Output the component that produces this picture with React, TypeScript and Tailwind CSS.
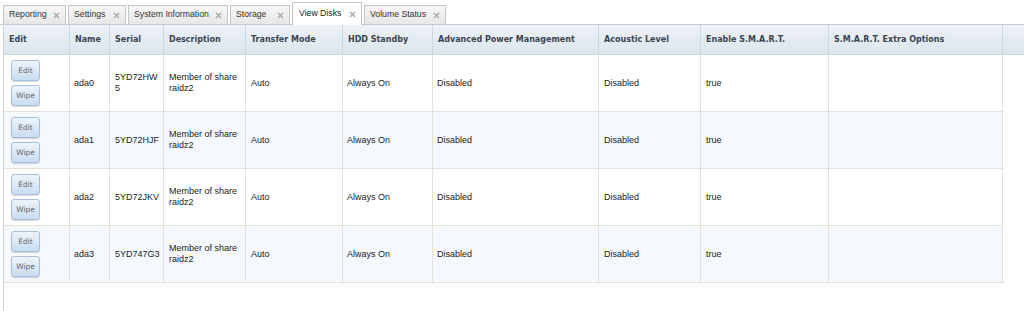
import React from "react";

const tabs = [
  { label: "Reporting", w: "w-[63px]" },
  { label: "Settings", w: "w-[58px]" },
  { label: "System Information", w: "w-[100px]" },
  { label: "Storage", w: "w-[60px]" },
  { label: "View Disks", w: "w-[70px]", active: true },
  { label: "Volume Status", w: "w-[82px]" },
];

const headers = [
  "Edit",
  "Name",
  "Serial",
  "Description",
  "Transfer Mode",
  "HDD Standby",
  "Advanced Power Management",
  "Acoustic Level",
  "Enable S.M.A.R.T.",
  "S.M.A.R.T. Extra Options",
];

const disks = [
  { name: "ada0", serial: ["5YD72HW", "5"] },
  { name: "ada1", serial: ["5YD72HJF"] },
  { name: "ada2", serial: ["5YD72JKV"] },
  { name: "ada3", serial: ["5YD747G3"] },
];

const cols =
  "grid-cols-[66px_40px_54px_82px_97px_90px_166px_102px_128px_174px]";

function CloseX() {
  return (
    <svg width="7" height="7" viewBox="0 0 7 7" className="shrink-0">
      <path d="M1 1L6 6M6 1L1 6" stroke="#a9a9a9" strokeWidth="1.4" />
    </svg>
  );
}

function Btn({ label }: { label: string }) {
  return (
    <div className="w-[29px] h-[21px] flex items-center justify-center rounded-[3px] border border-[#a9bfd9] bg-gradient-to-b from-[#eef4fb] to-[#c9dcf1] shadow-[0_1px_1px_rgba(0,0,0,0.15)] text-[7.5px] text-[#666] font-['DejaVu_Sans',sans-serif]">
      {label}
    </div>
  );
}

export default function App() {
  return (
    <div className="w-[1024px] h-[311px] overflow-hidden bg-white font-['Liberation_Sans',Arial,sans-serif] text-[#222]">
      {/* tabs */}
      <div className="h-[25px] flex items-end gap-[2px] pl-[3px] border-b border-[#c3c9cf]">
        {tabs.map((t) => (
          <div
            key={t.label}
            className={
              t.active
                ? `${t.w} h-[23px] -mb-px flex items-center justify-between pl-[6px] pr-[5px] border border-b-0 border-[#c3c9cf] bg-white text-[8.7px] text-[#222]`
                : `${t.w} h-[19px] flex items-center justify-between pl-[5px] pr-[5px] border border-b-0 border-[#c6c6c6] bg-gradient-to-b from-[#f7f7f7] to-[#e7e7e7] text-[8.7px] text-[#333]`
            }
          >
            <span className="whitespace-nowrap">{t.label}</span>
            <CloseX />
          </div>
        ))}
      </div>

      {/* panel */}
      <div className="ml-[3px] h-[286px] border-l border-[#cfd3d6]">
        {/* header */}
        <div className="flex h-[30px] bg-gradient-to-b from-[#edf2f7] to-[#dce5ee] border-b border-[#cad5df]">
          <div className={`grid ${cols}`}>
            {headers.map((h) => (
              <div
                key={h}
                className="flex items-center pl-[5px] border-r border-[#cdd7e1] text-[8px] font-bold text-[#3a4450] whitespace-nowrap font-['DejaVu_Sans',sans-serif]"
              >
                {h}
              </div>
            ))}
          </div>
          <div className="flex-1" />
        </div>

        {/* rows */}
        <div className="w-[999px]">
          {disks.map((d, i) => (
            <div
              key={d.name}
              className={`grid ${cols} h-[57px] border-b border-[#e4e1d9] text-[9px] leading-[11px] ${
                i % 2 === 1 ? "bg-[#f5f9fd]" : "bg-white"
              }`}
            >
              <div className="flex flex-col gap-[4px] pl-[7px] pt-[5px] border-r border-[#e4e1d9]">
                <Btn label="Edit" />
                <Btn label="Wipe" />
              </div>
              <div className="flex items-center pl-[4px] border-r border-[#e4e1d9]">
                {d.name}
              </div>
              <div className="flex flex-col justify-center pl-[5px] border-r border-[#e4e1d9] whitespace-nowrap">
                {d.serial.map((s) => (
                  <span key={s}>{s}</span>
                ))}
              </div>
              <div className="flex flex-col justify-center pl-[5px] border-r border-[#e4e1d9] whitespace-nowrap">
                <span>Member of share</span>
                <span>raidz2</span>
              </div>
              <div className="flex items-center pl-[5px] border-r border-[#e4e1d9]">
                Auto
              </div>
              <div className="flex items-center pl-[4px] border-r border-[#e4e1d9]">
                Always On
              </div>
              <div className="flex items-center pl-[4px] border-r border-[#e4e1d9]">
                Disabled
              </div>
              <div className="flex items-center pl-[5px] border-r border-[#e4e1d9]">
                Disabled
              </div>
              <div className="flex items-center pl-[5px] border-r border-[#e4e1d9]">
                true
              </div>
              <div className="border-r border-[#e4e1d9]" />
            </div>
          ))}
        </div>
      </div>
    </div>
  );
}
